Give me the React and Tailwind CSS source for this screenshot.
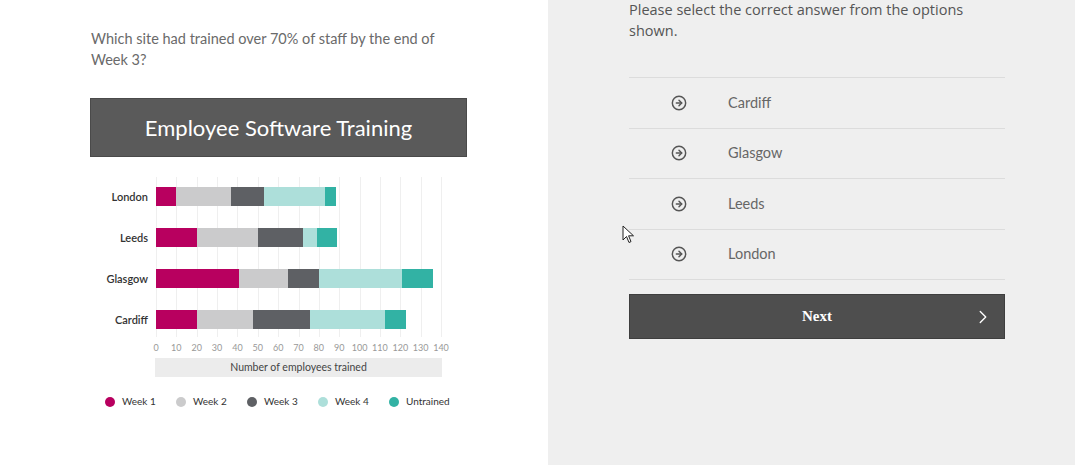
import { CircleArrowRight, ChevronRight } from 'lucide-react';

const COLORS = ['bg-[#b8005f]', 'bg-[#cbcbcc]', 'bg-[#5e6064]', 'bg-[#addfda]', 'bg-[#32b2a4]'];
const LEGEND = ['Week 1', 'Week 2', 'Week 3', 'Week 4', 'Untrained'];

// cumulative totals per site
const SITES = [
  { name: 'London', v: [10, 37, 53, 83, 88.5] },
  { name: 'Leeds', v: [20, 50, 72, 79, 89] },
  { name: 'Glasgow', v: [41, 65, 80, 121, 136] },
  { name: 'Cardiff', v: [20, 47.5, 75.5, 112.5, 123] },
];

const TICKS = [0, 10, 20, 30, 40, 50, 60, 70, 80, 90, 100, 110, 120, 130, 140];
const PX = 285 / 140;

const OPTIONS = ['Cardiff', 'Glasgow', 'Leeds', 'London'];

const Chart = () => (
  <div className="w-[377px]">
    {/* Plot */}
    <div className="flex gap-[8px]">
      <div className="w-[58px] pt-[10px] flex flex-col gap-[22px] text-right">
        {SITES.map((s) => (
          <div key={s.name} className="h-[19px] leading-[19px] text-[11px] font-semibold text-[#333]">
            {s.name}
          </div>
        ))}
      </div>
      <div className="relative w-[285px] pt-[10px] pb-[8px]">
        {/* grid lines */}
        {TICKS.map((t) => (
          <div
            key={t}
            className="absolute top-0 bottom-0 w-px bg-[#efefef]"
            style={{ left: t * PX }}
          />
        ))}
        <div className="relative flex flex-col gap-[22px]">
          {SITES.map((s) => (
            <div key={s.name} className="flex h-[19px]">
              {s.v.map((val, i) => (
                <div
                  key={i}
                  className={COLORS[i]}
                  style={{ width: (val - (i ? s.v[i - 1] : 0)) * PX }}
                />
              ))}
            </div>
          ))}
        </div>
      </div>
    </div>

    {/* Axis */}
    <div className="ml-[66px] w-[285px] relative h-[14px] mt-[4px]">
      {TICKS.map((t) => (
        <span
          key={t}
          className="absolute top-0 -translate-x-1/2 text-[9px] leading-[14px] text-[#999]"
          style={{ left: t * PX }}
        >
          {t}
        </span>
      ))}
    </div>
    <div className="ml-[65px] w-[287px] h-[19px] mt-[3px] bg-[#ececec] flex items-center justify-center text-[10.5px] text-[#444]">
      Number of employees trained
    </div>

    {/* Legend */}
    <div className="flex mt-[17px] ml-[15px] text-[10px] text-[#333]">
      {LEGEND.map((l, i) => (
        <div key={l} className="flex items-center gap-[7px] w-[71px]">
          <span className={`w-[10px] h-[10px] rounded-full ${COLORS[i]}`} />
          <span>{l}</span>
        </div>
      ))}
    </div>
  </div>
);

export default function App() {
  return (
    <div className="relative flex w-[1075px] h-[465px] overflow-hidden font-['Lato',sans-serif]">
      {/* Left: question + chart */}
      <div className="w-[548px] bg-white pl-[90px] pt-[28px]">
        <p className="w-[370px] pl-[1px] text-[14.5px] leading-[21px] text-[#6a6a6a]">
          Which site had trained over 70% of staff by the end of Week 3?
        </p>
        <div className="mt-[28px] w-[377px] h-[59px] bg-[#5a5a5a] border border-[#4a4a4a] flex items-center justify-center text-white text-[22px]">
          Employee Software Training
        </div>
        <div className="mt-[20px]">
          <Chart />
        </div>
      </div>

      {/* Right: answers */}
      <div className="flex-1 bg-[#efefef] pl-[81px]">
        <div className="w-[376px]">
          <p className="font-['Open_Sans',sans-serif] text-[14.5px] leading-[21px] text-[#555] -mt-[1px]">
            Please select the correct answer from the options shown.
          </p>
          <div className="mt-[36px] border-t border-[#dcdcdc]">
            {OPTIONS.map((o) => (
              <div key={o} className="h-[50.5px] border-b border-[#dcdcdc] flex items-center">
                <CircleArrowRight size={16} strokeWidth={2.2} className="ml-[42px] text-[#555]" />
                <span className="ml-[41px] text-[14.5px] text-[#666]">{o}</span>
              </div>
            ))}
          </div>
          <button className="mt-[14px] w-[376px] h-[45px] bg-[#4e4e4e] border border-[#3e3e3e] relative flex items-center justify-center text-white text-[15px] font-bold font-['Liberation_Serif',serif]">
            Next
            <ChevronRight size={22} strokeWidth={1.5} className="absolute right-[10px] top-[11px] text-white" />
          </button>
        </div>
      </div>

      {/* mouse cursor */}
      <svg className="absolute left-[622px] top-[225px]" width="14" height="20" viewBox="0 0 14 20">
        <path d="M1 1 L1 15 L4.5 11.5 L7 17.5 L9 16.6 L6.6 10.8 L11.5 10.8 Z" fill="white" stroke="#222" strokeWidth="1" strokeLinejoin="round" />
      </svg>
    </div>
  );
}
